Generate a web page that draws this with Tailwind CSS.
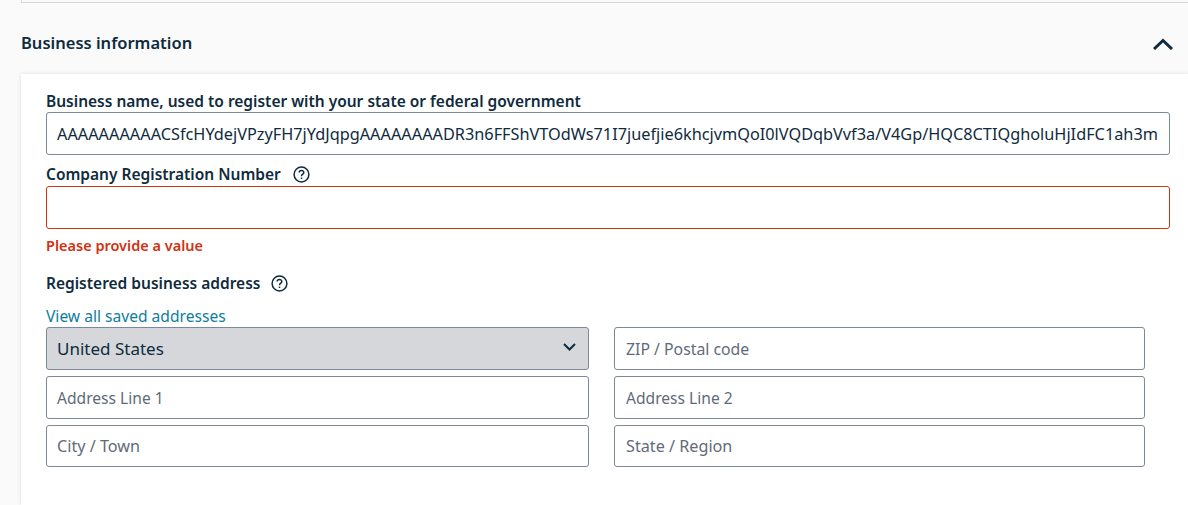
<!DOCTYPE html>
<html lang="en">
<head>
  <meta charset="UTF-8">
  <title>Business information</title>
  <script src="https://cdn.jsdelivr.net/npm/@tailwindcss/browser@4"></script>
</head>
<body class="bg-[#fafafa] h-[505px] w-[1188px] overflow-hidden font-['Noto_Sans',sans-serif] text-[#0f2b3d]">
  <div class="ml-[21px] h-[3px] border-l border-b border-[#d5d7da]"></div>

  <div class="h-[71px] pl-[21px] pr-[15px] flex justify-between">
    <h2 class="pt-[29px] text-[16.5px] leading-[22px] font-semibold">Business information</h2>
    <svg class="mt-[35px]" width="20" height="12" viewBox="0 0 20 12" fill="none" stroke="#0f2b3d" stroke-width="3" stroke-linejoin="miter"><path d="M1 11 L10 2.5 L19 11"/></svg>
  </div>

  <div class="ml-[21px] h-[431px] bg-white shadow-[0_0_4px_rgba(0,0,0,0.12)] pl-[25px] pr-[18px] pt-[17px]">
    <label class="block text-[15.5px] leading-[20px] font-semibold">Business name, used to register with your state or federal government</label>
    <input type="text" value="AAAAAAAAAACSfcHYdejVPzyFH7jYdJqpgAAAAAAAADR3n6FFShVTOdWs71I7juefjie6khcjvmQoI0lVQDqbVvf3a/V4Gp/HQC8CTIQgholuHjIdFC1ah3m" class="mt-[1px] block w-full h-[43px] px-[10px] border border-[#7d8998] rounded-[3px] text-[16.3px] text-[#0f2b3d] bg-white">

    <div class="mt-[9px] flex items-center gap-[12px] h-[20px]">
      <label class="text-[15.5px] leading-[20px] font-semibold">Company Registration Number</label>
      <svg width="17" height="17" viewBox="0 0 17 17" fill="none" stroke="#0f2b3d" stroke-width="1.5"><circle cx="8.5" cy="8.5" r="7.4"/><path d="M6.2 6.6 C6.2 3.8 10.8 3.8 10.8 6.5 C10.8 8.2 8.5 8.2 8.5 10.2"/><path d="M8.5 11.6 V13"/></svg>
    </div>
    <input type="text" class="mt-[2px] block w-full h-[43px] px-[10px] border border-[#d13212] rounded-[3px] bg-white">
    <p class="mt-[6px] text-[14.5px] leading-[20px] font-semibold text-[#d13212]">Please provide a value</p>

    <div class="mt-[18px] flex items-center gap-[11px] h-[20px]">
      <label class="text-[15.5px] leading-[20px] font-semibold">Registered business address</label>
      <svg width="17" height="17" viewBox="0 0 17 17" fill="none" stroke="#0f2b3d" stroke-width="1.5"><circle cx="8.5" cy="8.5" r="7.4"/><path d="M6.2 6.6 C6.2 3.8 10.8 3.8 10.8 6.5 C10.8 8.2 8.5 8.2 8.5 10.2"/><path d="M8.5 11.6 V13"/></svg>
    </div>
    <a class="block mt-[13px] mb-[1px] text-[15.6px] leading-[20px] text-[#0f7d9c]">View all saved addresses</a>

    <div class="grid grid-cols-[543px_531px] gap-x-[25px] gap-y-[6px]">
      <div class="h-[43px] px-[10px] flex items-center justify-between bg-[#d5d7da] border border-[#7d8998] rounded-[3px] text-[17px]">
        <span>United States</span>
        <svg class="mr-[2px] -mt-[3px]" width="13" height="8" viewBox="0 0 13 8" fill="none" stroke="#0f2b3d" stroke-width="2"><path d="M1 1 L6.5 6.5 L12 1"/></svg>
      </div>
      <input type="text" placeholder="ZIP / Postal code" class="h-[43px] pl-[11px] pr-[10px] border border-[#7d8998] rounded-[3px] text-[15.8px] bg-white placeholder:text-[#5f6b7a]">
      <input type="text" placeholder="Address Line 1" class="h-[43px] px-[10px] border border-[#7d8998] rounded-[3px] text-[15.6px] bg-white placeholder:text-[#5f6b7a]">
      <input type="text" placeholder="Address Line 2" class="h-[43px] pl-[11px] pr-[10px] border border-[#7d8998] rounded-[3px] text-[15.6px] bg-white placeholder:text-[#5f6b7a]">
      <input type="text" placeholder="City / Town" class="h-[42px] px-[10px] border border-[#7d8998] rounded-[3px] text-[16.2px] bg-white placeholder:text-[#5f6b7a]">
      <input type="text" placeholder="State / Region" class="h-[42px] pl-[11px] pr-[10px] border border-[#7d8998] rounded-[3px] text-[16.2px] bg-white placeholder:text-[#5f6b7a]">
    </div>
  </div>
</body>
</html>
